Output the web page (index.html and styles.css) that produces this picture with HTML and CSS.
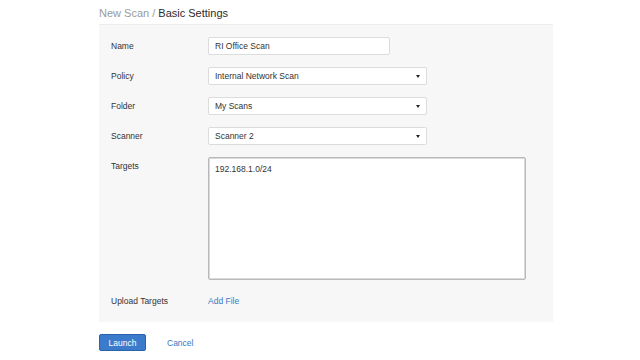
FILE: index.html
```html
<!DOCTYPE html>
<html lang="en">
<head>
  <meta charset="UTF-8" />
  <meta name="viewport" content="width=device-width, initial-scale=1.0" />
  <title>New Scan</title>
  <link rel="stylesheet" href="styles.css">
</head>
<body>
  <main class="page">
    <h1 class="title"><span class="crumb">New Scan /</span> Basic Settings</h1>

    <form class="panel">
      <div class="row">
        <label>Name</label>
        <input class="field name-field" type="text" value="RI Office Scan" />
      </div>
      <div class="row">
        <label>Policy</label>
        <div class="field select"><span>Internal Network Scan</span><i class="caret"></i></div>
      </div>
      <div class="row">
        <label>Folder</label>
        <div class="field select"><span>My Scans</span><i class="caret"></i></div>
      </div>
      <div class="row">
        <label>Scanner</label>
        <div class="field select"><span>Scanner 2</span><i class="caret"></i></div>
      </div>
      <div class="row top">
        <label>Targets</label>
        <textarea class="targets">192.168.1.0/24</textarea>
      </div>
      <div class="row">
        <label>Upload Targets</label>
        <a href="#" class="link">Add File</a>
      </div>
    </form>

    <div class="actions">
      <button class="btn">Launch</button>
      <a href="#" class="link">Cancel</a>
    </div>
  </main>
</body>
</html>
```

FILE: styles.css
```css
body {
  margin: 0;
  background: #fff;
  font-family: "Liberation Sans", Arial, sans-serif;
  color: #333;
}

.page {
  padding-left: 99px;
  width: 454px;
}

.title {
  margin: 0;
  height: 24px;
  line-height: 26px;
  font-size: 11px;
  font-weight: normal;
  color: #2b2b2b;
}

.crumb {
  color: #9a9a9a;
}

.panel {
  background: #f7f7f7;
  border-top: 1px solid #ececec;
  padding: 12px 0 12px 12px;
  display: flex;
  flex-direction: column;
  gap: 12px;
}

.row {
  display: flex;
  align-items: center;
  min-height: 18px;
}

.row.top {
  align-items: flex-start;
}

.row label {
  width: 97px;
  font-size: 8.5px;
  color: #333;
}

.row.top label {
  padding-top: 4px;
}

.field {
  box-sizing: border-box;
  height: 18px;
  background: #fff;
  border: 1px solid #dcdcdc;
  border-radius: 2px;
  font-family: inherit;
  font-size: 8.5px;
  color: #333;
  padding: 0 6px;
}

.name-field {
  width: 182px;
  outline: none;
}

.select {
  width: 219px;
  display: flex;
  align-items: center;
  justify-content: space-between;
  padding-right: 6px;
}

.caret {
  width: 0;
  height: 0;
  border-left: 2.5px solid transparent;
  border-right: 2.5px solid transparent;
  border-top: 3px solid #1d2430;
}

.targets {
  box-sizing: border-box;
  width: 318px;
  height: 123px;
  border: 1px solid #b9b9b9;
  box-shadow: inset 0 0 0 1px #dadada;
  border-radius: 2px;
  padding: 6px 6px;
  resize: none;
  font-family: inherit;
  font-size: 8.5px;
  color: #333;
  outline: none;
}

.link {
  color: #3b78c4;
  font-size: 8.5px;
  text-decoration: none;
}

.actions {
  display: flex;
  align-items: center;
  gap: 21px;
  margin-top: 12px;
}

.btn {
  width: 47px;
  height: 17px;
  background: #3c7bcc;
  border: 1px solid #2c62a8;
  border-radius: 2px;
  color: #fff;
  font-family: inherit;
  font-size: 8.5px;
  padding: 0;
  cursor: pointer;
}
```
